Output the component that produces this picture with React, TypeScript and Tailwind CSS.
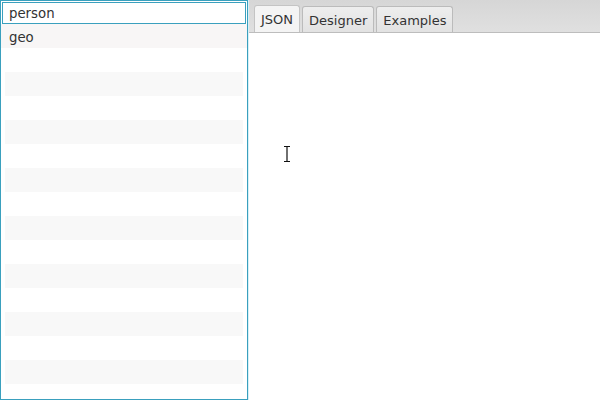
const rows = Array.from({ length: 15 }, (_, i) => i)

function TextCursor() {
  return (
    <svg width="10" height="18" viewBox="0 0 10 18" className="absolute left-[282px] top-[145px]">
      <path d="M2 1.5h6M5 1.5v15M2 16.5h6" stroke="#fff" strokeWidth="3" fill="none" />
      <path d="M2 1.5h6M5 1.5v15M2 16.5h6" stroke="#111" strokeWidth="1.2" fill="none" />
    </svg>
  )
}

export default function App() {
  return (
    <div className="relative flex h-[400px] w-[600px] overflow-hidden bg-white text-[13.3px] text-[#333]" style={{ fontFamily: '"DejaVu Sans", sans-serif' }}>
      {/* left list */}
      <div className="flex h-full w-[249px] shrink-0 flex-col border-r border-r-[#d6f0f8]">
        <div className="flex h-full flex-col border border-[#3aa0be] bg-white">
          <div className="mx-px mt-px flex h-[22px] items-center border border-[#3aa0be] bg-white px-[6px] pt-px">
            person
          </div>
          <div className="flex flex-col">
            {rows.map(i => (
              <div
                key={i}
                className={`h-[24px] flex items-center px-[8px] pt-[3px] ${
                  i === 0 ? 'bg-[#f8f6f6]' : i % 2 === 0 ? 'mx-[4px] bg-[#f8f8f8]' : ''
                }`}
              >
                {i === 0 ? 'geo' : ''}
              </div>
            ))}
          </div>
        </div>
      </div>

      {/* right tab pane */}
      <div className="flex flex-1 flex-col text-[13px]">
        <div className="flex h-[33px] items-end gap-[2px] border-b border-[#bdbdbd] bg-gradient-to-b from-[#d6d6d6] to-[#e0e0e0] pl-[5px]">
          <div className="flex h-[27px] items-center rounded-t-[3px] border border-b-0 border-[#c4c4c4] bg-[#f4f4f4] px-[6px] pt-[2px]">JSON</div>
          <div className="flex h-[26px] items-center rounded-t-[3px] border border-b-0 border-[#bbbbbb] bg-gradient-to-b from-[#eeeeee] to-[#e2e2e2] px-[6px] pt-[2px]">Designer</div>
          <div className="flex h-[26px] items-center rounded-t-[3px] border border-b-0 border-[#bbbbbb] bg-gradient-to-b from-[#eeeeee] to-[#e2e2e2] px-[6px] pt-[2px]">Examples</div>
        </div>
        <div className="flex-1 bg-white" />
      </div>

      <TextCursor />
    </div>
  )
}
